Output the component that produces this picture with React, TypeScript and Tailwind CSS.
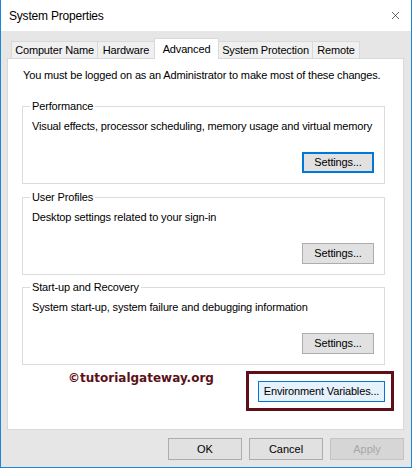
import { X } from 'lucide-react'

const tabs = [
  { label: 'Computer Name', width: 'w-[87px]' },
  { label: 'Hardware', width: 'w-[58px]' },
  { label: 'Advanced', width: 'w-[65px]', active: true },
  { label: 'System Protection', width: 'w-[95px]' },
  { label: 'Remote', width: 'w-[48px]' },
]

const groups = [
  { title: 'Performance', text: 'Visual effects, processor scheduling, memory usage and virtual memory', gap: 'mt-[17px]', focused: true },
  { title: 'User Profiles', text: 'Desktop settings related to your sign-in', gap: 'mt-[6px]' },
  { title: 'Start-up and Recovery', text: 'System start-up, system failure and debugging information', gap: 'mt-[5px]' },
]

function WinButton({ children, focused, disabled, className = '' }: { children: React.ReactNode; focused?: boolean; disabled?: boolean; className?: string }) {
  return (
    <button
      type="button"
      className={`flex items-center justify-center text-[11px] leading-none ${
        focused
          ? 'border-2 border-[#0078d7] bg-[#e1e1e1] text-black'
          : disabled
            ? 'border border-[#c4c4c4] bg-[#d6d6d6] text-[#a8a8a8]'
            : 'border border-[#adadad] bg-[#e1e1e1] text-black'
      } ${className}`}
    >
      {children}
    </button>
  )
}

export default function App() {
  return (
    <div className="w-[412px] h-[468px] flex flex-col border-x border-b border-[#1c86d9] bg-[#e6e6e6] font-['Liberation_Sans',Arial,sans-serif] text-black">
      {/* Title bar */}
      <div className="h-[31px] bg-white flex items-center justify-between pl-[8px] pr-[9px]">
        <span className="text-[12px] tracking-[-0.2px]">System Properties</span>
        <X size={13} strokeWidth={1.2} className="text-[#111]" />
      </div>

      <div className="flex-1 flex flex-col pl-[6px] pr-[7px]">
        {/* Tabs */}
        <div className="flex items-end h-[27px] pt-[7px] pl-[4px]">
          {tabs.map((tab, i) => (
            <div
              key={tab.label}
              className={`${tab.width} ${i > 0 ? '-ml-px' : ''} flex items-center justify-center text-[11px] tracking-[-0.15px] border-t border-x border-[#d9d9d9] ${
                tab.active ? 'relative z-10 h-[21px] -mb-px bg-white' : 'h-[17px] bg-[#f0f0f0]'
              }`}
            >
              {tab.label}
            </div>
          ))}
        </div>

        {/* Panel */}
        <div className="h-[372px] border border-[#d9d9d9] bg-white pt-[9px] text-[11px] leading-[14px] tracking-[-0.15px]">
          <p className="pl-[15px] whitespace-nowrap">You must be logged on as an Administrator to make most of these changes.</p>

          {groups.map((g) => (
            <fieldset key={g.title} className={`${g.gap} ml-[14px] w-[363px] border border-[#dcdcdc] pl-[9px] pr-[10px] pb-[10px]`}>
              <legend className="-ml-[2px] px-[2px] leading-[14px]">{g.title}</legend>
              <p className="mt-[6px] whitespace-nowrap">{g.text}</p>
              <div className="flex justify-end mt-[19px]">
                <WinButton focused={g.focused} className="w-[72px] h-[21px]">Settings...</WinButton>
              </div>
            </fieldset>
          ))}

          <div className="mt-[5px] ml-[14px] w-[363px] flex justify-between items-start">
            <span className="ml-[46px] font-['DejaVu_Sans',sans-serif] font-bold text-[12px] leading-[16px] tracking-normal text-[#5c1018]">
              ©tutorialgateway.org
            </span>
            <div className="relative mt-[11px]">
              <span className="absolute -left-[12px] -top-[10px] -right-[9px] -bottom-[9px] border-[3px] border-[#5e0f18]" />
              <button type="button" className="w-[127px] h-[21px] border border-[#0078d7] bg-[#e5f1fb] text-[11px] leading-none">
                Environment Variables...
              </button>
            </div>
          </div>
        </div>

        {/* Dialog buttons */}
        <div className="flex justify-end gap-[7px] mt-[8px]">
          <WinButton className="w-[74px] h-[22px]">OK</WinButton>
          <WinButton className="w-[74px] h-[22px]">Cancel</WinButton>
          <WinButton disabled className="w-[74px] h-[22px]">Apply</WinButton>
        </div>
      </div>
    </div>
  )
}
